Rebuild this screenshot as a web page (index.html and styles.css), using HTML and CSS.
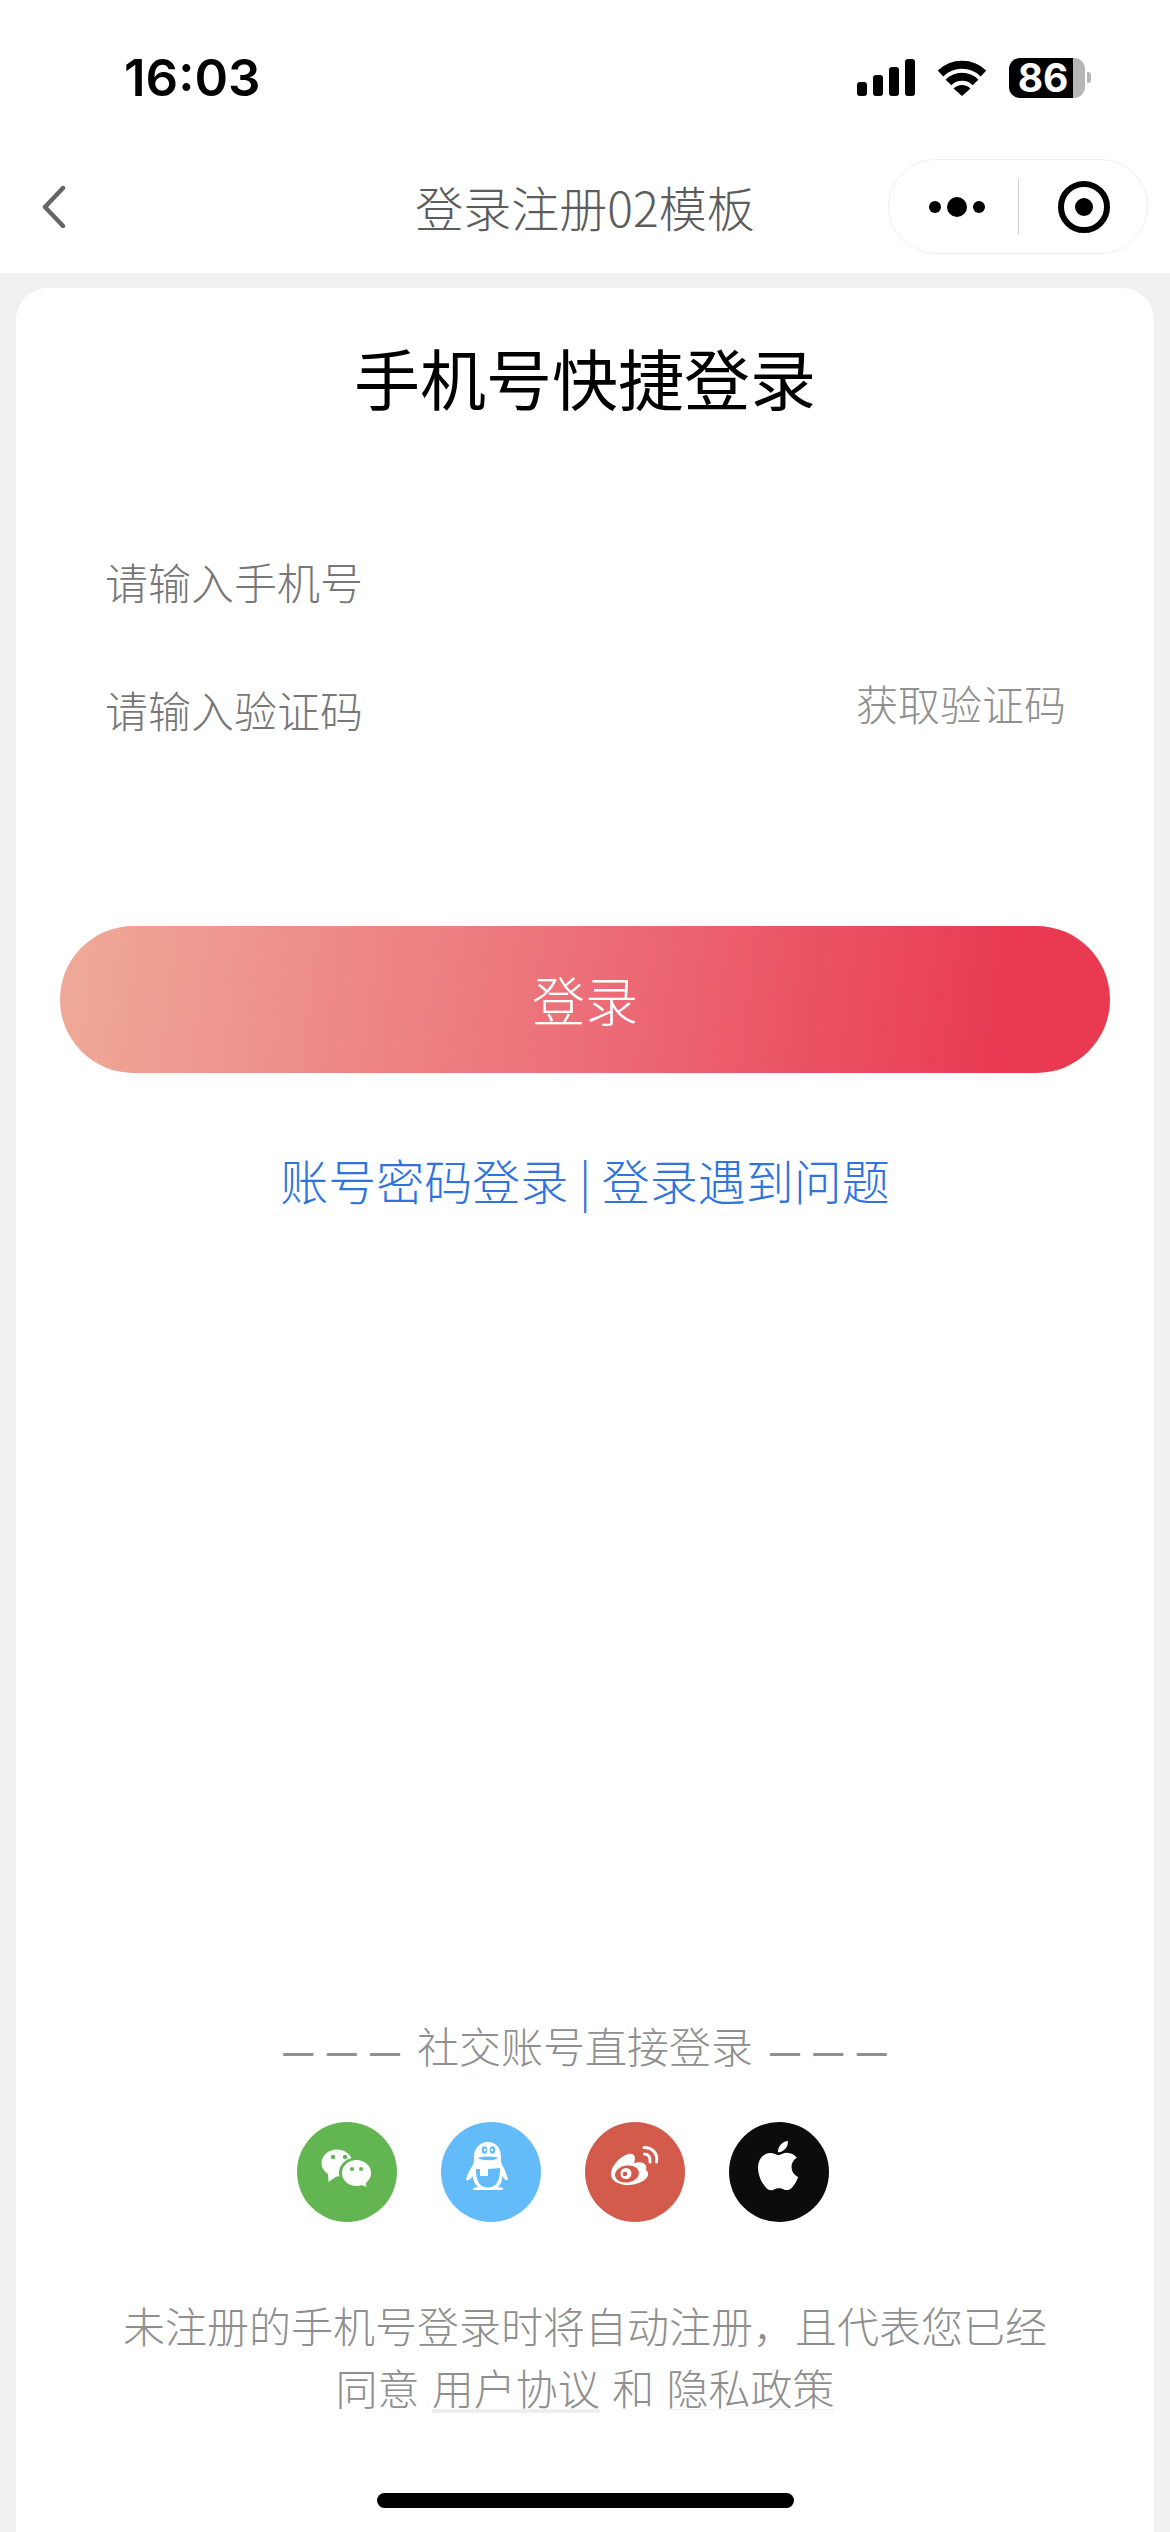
FILE: index.html
```html
<!DOCTYPE html>
<html lang="zh-CN">
<head>
    <meta charset="UTF-8">
    <title>登录注册02模板</title>
    <link rel="stylesheet" href="styles.css">
</head>
<body>
<div class="page">
    <div class="status">
        <span class="time">16:03</span>
        <div class="status-icons">
            <div class="signal"><i class="s1"></i><i class="s2"></i><i class="s3"></i><i class="s4"></i></div>
            <svg class="wifi" viewBox="0 0 50 37">
                <path d="M3.500 14.500A31 31 0 0 1 46.500 14.500" fill="none" stroke="#000" stroke-width="8"/>
                <path d="M11.500 23.500A19 19 0 0 1 38.500 23.500" fill="none" stroke="#000" stroke-width="8"/>
                <path d="M25 37L16.500 29.500A12 12 0 0 1 33.500 29.500Z" fill="#000"/>
            </svg>
            <div class="battery">
                <div class="battery-body"><span class="battery-num">86</span></div>
                <i class="battery-nub"></i>
            </div>
        </div>
    </div>

    <div class="nav">
        <div class="nav-left">
            <svg class="back" viewBox="0 0 24 42"><path d="M21 2L3 21L21 40" fill="none" stroke="#666" stroke-width="4.500" stroke-linecap="round" stroke-linejoin="round"/></svg>
        </div>
        <div class="nav-title">登录注册02模板</div>
        <div class="nav-right">
            <div class="capsule">
                <div class="more"><i class="dot"></i><i class="dot dot-big"></i><i class="dot"></i></div>
                <i class="capsule-line"></i>
                <div class="target"><i></i></div>
            </div>
        </div>
    </div>

    <div class="card">
        <h2 class="card-title">手机号快捷登录</h2>
        <div class="field field-phone">请输入手机号</div>
        <div class="field field-code">
            <span>请输入验证码</span>
            <span class="get-code">获取验证码</span>
        </div>
        <div class="login-btn">登录</div>
        <div class="links">账号密码登录 | 登录遇到问题</div>

        <div class="bottom">
            <div class="social-title"><span class="dash">— — —</span>社交账号直接登录<span class="dash">— — —</span></div>
            <div class="social">
                <svg class="social-icon" viewBox="0 0 100 100">
                    <circle cx="50" cy="50" r="50" fill="#62b550"/>
                    <ellipse cx="40" cy="41" rx="15.500" ry="13.500" fill="#fff"/>
                    <path d="M31 51L31.500 60L40 54Z" fill="#fff"/>
                    <ellipse cx="59" cy="51" rx="17" ry="15.500" fill="#62b550"/>
                    <ellipse cx="59.500" cy="51" rx="14.500" ry="13" fill="#fff"/>
                    <path d="M62 62L69.500 65L68 58Z" fill="#fff"/>
                    <circle cx="36" cy="35" r="2.200" fill="#62b550"/>
                    <circle cx="48" cy="35" r="2.200" fill="#62b550"/>
                    <circle cx="55" cy="47" r="2" fill="#62b550"/>
                    <circle cx="64" cy="47" r="2" fill="#62b550"/>
                </svg>
                <svg class="social-icon" viewBox="0 0 100 100">
                    <circle cx="50" cy="50" r="50" fill="#64bbf9"/>
                    <path d="M47 20C38 20 33 27 33 35C33 38 33 41 32 43C29 47 26 53 25 58C27 59 30 57 32 54C32 59 34 62 37 65L32 66L32 68L62 68L62 66L57 65C60 62 61 59 61 54C63 57 65 59 67 58C66 53 64 47 61 43C60 41 60 38 60 35C60 27 56 20 47 20Z" fill="#fff"/>
                    <ellipse cx="43.500" cy="28" rx="2.800" ry="3.800" fill="#64bbf9"/>
                    <ellipse cx="51.500" cy="28" rx="2.800" ry="3.800" fill="#64bbf9"/>
                    <circle cx="44" cy="28" r="1.200" fill="#fff"/>
                    <circle cx="51" cy="28" r="1.200" fill="#fff"/>
                    <path d="M37 36C42 34 52 34 57 36C54 39 41 39 37 36Z" fill="#64bbf9"/>
                    <path d="M35 47L39 47L39 54L47 54L47 47L59 46C59 55 58 65 47 65.500C37 65.500 35 56 35 47Z" fill="#64bbf9"/>
                </svg>
                <svg class="social-icon" viewBox="0 0 100 100">
                    <circle cx="50" cy="50" r="50" fill="#d25b4b"/>
                    <path d="M26 52C26 44 35 34 44 32C50 31 51 36 49 41C56 39 63 41 61 48C65 51 63 56 58 59C50 64 39 64 33 61C28 59 26 56 26 52Z" fill="#fff"/>
                    <ellipse cx="42" cy="52" rx="12" ry="8.500" transform="rotate(-8 42 52)" fill="#d25b4b"/>
                    <circle cx="41" cy="51.500" r="5.500" fill="#fff"/>
                    <circle cx="40" cy="52" r="2.300" fill="#d25b4b"/>
                    <path d="M59 25.500C67 25.500 73 31 71.500 40" fill="none" stroke="#fff" stroke-width="3" stroke-linecap="round"/>
                    <path d="M59.500 32C63 32 66 35 65 40" fill="none" stroke="#fff" stroke-width="3" stroke-linecap="round"/>
                </svg>
                <svg class="social-icon" viewBox="0 0 100 100">
                    <circle cx="50" cy="50" r="50" fill="#0c0c0c"/>
                    <path transform="translate(24.500 19) scale(2.050)" d="M12.152 6.896c-.948 0-2.415-1.078-3.960-1.040-2.040.027-3.910 1.183-4.961 3.014-2.117 3.675-.546 9.103 1.519 12.090 1.013 1.454 2.208 3.090 3.792 3.039 1.520-.065 2.090-.987 3.935-.987 1.831 0 2.350.987 3.960.948 1.637-.026 2.676-1.480 3.676-2.948 1.156-1.688 1.636-3.325 1.662-3.415-.039-.013-3.182-1.221-3.220-4.857-.026-3.040 2.480-4.494 2.597-4.559-1.429-2.090-3.623-2.324-4.390-2.376-2-.156-3.675 1.090-4.610 1.090zM15.530 3.830c.843-1.012 1.400-2.427 1.245-3.830-1.207.052-2.662.805-3.532 1.818-.780.896-1.454 2.338-1.273 3.714 1.338.104 2.715-.688 3.559-1.701" fill="#fff"/>
                </svg>
            </div>
            <div class="agree">
                未注册的手机号登录时将自动注册，且代表您已经<br>
                <span class="agree-line">同意 <span class="agree-link agree-link-thick">用户协议</span> 和 <span class="agree-link">隐私政策</span></span>
            </div>
        </div>
    </div>
    <div class="home-bar"></div>
</div>
</body>
</html>
```

FILE: styles.css
```css
*{
    margin:0;
    padding:0;
    box-sizing:border-box;
}
html,body{
    width:1170px;
    height:2532px;
    overflow:hidden;
}
body{
    font-family:"Noto Sans CJK SC","Liberation Sans",sans-serif;
    font-weight:300;
    background:#f1f1f1;
}
i{
    display:block;
}
.page{
    position:relative;
    display:flex;
    flex-direction:column;
    width:1170px;
    height:2532px;
}

/* status bar */
.status{
    display:flex;
    justify-content:space-between;
    align-items:center;
    height:159px;
    padding:0 79px 4px 124px;
    background:#fff;
}
.time{
    font-family:Inter,"Liberation Sans",sans-serif;
    font-size:51px;
    font-weight:600;
    line-height:60px;
    color:#000;
}
.status-icons{
    display:flex;
    align-items:center;
    gap:22px;
}
.signal{
    display:flex;
    align-items:flex-end;
    gap:6px;
    height:37px;
}
.signal i{
    width:10px;
    background:#000;
    border-radius:3px;
}
.signal .s1{height:14px;}
.signal .s2{height:21px;}
.signal .s3{height:29px;}
.signal .s4{height:37px;}
.wifi{
    width:50px;
    height:37px;
}
.battery{
    display:flex;
    align-items:center;
    gap:2px;
}
.battery-body{
    width:76px;
    height:40px;
    border-radius:11px;
    background:linear-gradient(90deg,#000 84%,#b5b5b5 84%);
}
.battery-num{
    display:block;
    width:68px;
    font-family:Inter,"Liberation Sans",sans-serif;
    font-size:39px;
    font-weight:700;
    line-height:40px;
    text-align:center;
    color:#fff;
}
.battery-nub{
    width:4px;
    height:11px;
    background:#b5b5b5;
    border-radius:0 3px 3px 0;
}

/* nav */
.nav{
    display:grid;
    grid-template-columns:1fr auto 1fr;
    align-items:center;
    height:114px;
    background:#fff;
}
.nav-left{
    padding:0 0 0 42px;
}
.back{
    display:block;
    width:24px;
    height:42px;
    margin-top:-19px;
}
.nav-title{
    margin-top:-21px;
    font-size:48px;
    line-height:70px;
    color:#5c5c5c;
}
.nav-right{
    display:flex;
    justify-content:flex-end;
    padding-right:22px;
}
.capsule{
    display:flex;
    align-items:center;
    width:260px;
    height:95px;
    margin-top:-19px;
    border:1px solid #eeeeee;
    border-radius:48px;
    background:#fff;
}
.more{
    display:flex;
    align-items:center;
    gap:6px;
    margin-left:40px;
}
.dot{
    width:12px;
    height:12px;
    border-radius:50%;
    background:#000;
}
.dot-big{
    width:20px;
    height:20px;
}
.capsule-line{
    width:1px;
    height:56px;
    margin-left:33px;
    background:#ccc;
}
.target{
    display:flex;
    align-items:center;
    justify-content:center;
    width:52px;
    height:52px;
    margin-left:39px;
    border:6px solid #000;
    border-radius:50%;
}
.target i{
    width:18px;
    height:18px;
    border-radius:50%;
    background:#000;
}

/* card */
.card{
    display:flex;
    flex-direction:column;
    flex:1;
    margin:15px 16px 0;
    background:#fff;
    border-radius:32px 32px 0 0;
}
.card-title{
    margin-top:38px;
    font-size:66px;
    font-weight:400;
    line-height:100px;
    text-align:center;
    color:#000;
}
.field{
    display:flex;
    justify-content:space-between;
    padding:0 88px 0 89px;
    font-size:43px;
    line-height:80px;
    color:#777;
}
.field-phone{
    margin-top:115px;
}
.field-code{
    margin-top:48px;
}
.get-code{
    margin-top:-6px;
    font-size:42px;
    color:#909090;
}
.login-btn{
    height:147px;
    margin:177px 44px 0;
    border-radius:74px;
    background:linear-gradient(97deg,#efa897 2%,#ec6e78 50%,#e93a52 90%);
    font-size:53px;
    line-height:147px;
    text-align:center;
    color:#fff;
}
.links{
    margin-top:71px;
    font-size:48px;
    line-height:70px;
    text-align:center;
    color:#2f74dc;
}
.bottom{
    margin-top:auto;
    padding-bottom:114px;
}
.social-title{
    font-size:42px;
    line-height:60px;
    text-align:center;
    color:#8f8f8f;
    transform:translateY(6px);
}
.dash{
    margin:0 17px;
    font-family:"Liberation Sans",sans-serif;
    font-size:30px;
    font-weight:700;
    word-spacing:5px;
}
.social{
    display:flex;
    justify-content:center;
    gap:44px;
    margin-top:45px;
    padding-right:44px;
}
.social-icon{
    display:block;
    width:100px;
    height:100px;
}
.agree{
    margin-top:72px;
    font-size:42px;
    line-height:62px;
    text-align:center;
    color:#8f8f8f;
}
.agree-line{
    word-spacing:3px;
}
.agree-link{
    text-decoration:underline 1px #eee;
    text-underline-offset:4px;
}
.agree-link-thick{
    text-decoration-thickness:4px;
}
.home-bar{
    position:absolute;
    left:377px;
    bottom:24px;
    width:417px;
    height:15px;
    background:#000;
    border-radius:8px;
}
```
